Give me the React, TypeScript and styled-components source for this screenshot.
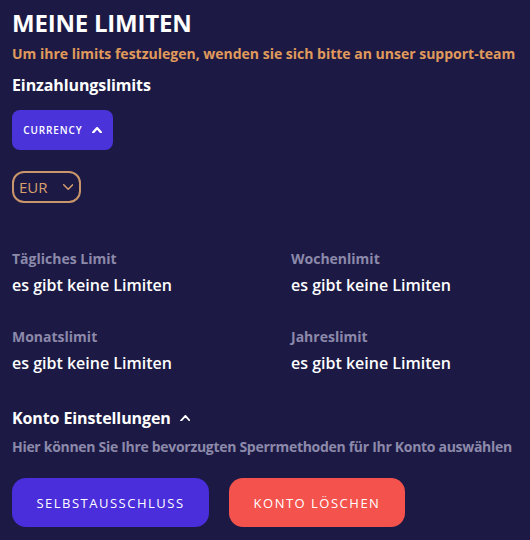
import React from "react";
import styled, { createGlobalStyle } from "styled-components";

const Global = createGlobalStyle`
  html, body { margin: 0; padding: 0; background: #1c1a44; }
  body { font-family: "Open Sans", "Noto Sans", sans-serif; }
`;

const Page = styled.div`
  width: 530px;
  height: 540px;
  box-sizing: border-box;
  padding: 7px 12px 0 12px;
  background: #1c1a44;
  color: #ffffff;
  display: flex;
  flex-direction: column;
  align-items: flex-start;
`;

const Title = styled.h1`
  margin: 0;
  font-size: 24px;
  line-height: 32px;
  font-weight: 700;
  letter-spacing: -0.2px;
`;

const Notice = styled.p`
  margin: 5px 0 0 0;
  font-size: 14px;
  line-height: 20px;
  font-weight: 700;
  color: #e09a5c;
  white-space: nowrap;
`;

const SectionTitle = styled.h2<{ $top: number }>`
  margin: ${(p) => p.$top}px 0 0 0;
  font-size: 16px;
  line-height: 22px;
  font-weight: 700;
  letter-spacing: -0.1px;
  display: flex;
  align-items: center;
  gap: 9px;
`;

const CurrencyButton = styled.button`
  margin-top: 14px;
  width: 101px;
  height: 40px;
  border: none;
  border-radius: 8px;
  background: #4a33d9;
  color: #ffffff;
  font-family: inherit;
  font-size: 10px;
  font-weight: 600;
  letter-spacing: 0.9px;
  display: flex;
  align-items: center;
  justify-content: center;
  gap: 9px;
  padding: 0;
`;

const Select = styled.div`
  margin-top: 21px;
  width: 69px;
  height: 32px;
  box-sizing: border-box;
  border: 2px solid #c9956a;
  border-radius: 12px;
  color: #d9a06f;
  font-size: 15px;
  display: flex;
  align-items: center;
  padding-left: 5px;
  gap: 15px;
`;

const LimitGrid = styled.div`
  margin-top: 47px;
  width: 100%;
  display: grid;
  grid-template-columns: 1fr 1fr;
  column-gap: 52px;
  row-gap: 32px;
`;

const LimitItem = styled.div`
  display: flex;
  flex-direction: column;
  gap: 6px;
`;

const LimitLabel = styled.span`
  font-size: 14px;
  line-height: 18px;
  font-weight: 700;
  color: #8c89aa;
`;

const LimitValue = styled.span`
  font-size: 16px;
  line-height: 22px;
  font-weight: 600;
  color: #ffffff;
`;

const Description = styled.p`
  margin: 8px 0 0 0;
  font-size: 14px;
  line-height: 20px;
  font-weight: 700;
  letter-spacing: -0.3px;
  color: #8c89aa;
  white-space: nowrap;
`;

const ButtonRow = styled.div`
  margin-top: 21px;
  display: flex;
  gap: 20px;
`;

const ActionButton = styled.button<{ $tone: "purple" | "red"; $width: number }>`
  width: ${(p) => p.$width}px;
  height: 49px;
  border: none;
  border-radius: 14px;
  background: ${(p) => (p.$tone === "purple" ? "#4a2ddb" : "#f4524d")};
  color: #ffffff;
  font-family: inherit;
  font-size: 13px;
  font-weight: 400;
  letter-spacing: 1.5px;
  padding: 0;
`;

const Chevron = ({
  dir,
  width,
  height,
  color,
  stroke,
}: {
  dir: "up" | "down";
  width: number;
  height: number;
  color: string;
  stroke: number;
}) => (
  <svg
    width={width + stroke}
    height={height + stroke}
    viewBox={`${-stroke / 2} ${-stroke / 2} ${width + stroke} ${height + stroke}`}
    fill="none"
    stroke={color}
    strokeWidth={stroke}
    strokeLinecap="round"
    strokeLinejoin="round"
  >
    {dir === "up" ? (
      <polyline points={`0 ${height} ${width / 2} 0 ${width} ${height}`} />
    ) : (
      <polyline points={`0 0 ${width / 2} ${height} ${width} 0`} />
    )}
  </svg>
);

const limits = [
  { label: "Tägliches Limit", value: "es gibt keine Limiten" },
  { label: "Wochenlimit", value: "es gibt keine Limiten" },
  { label: "Monatslimit", value: "es gibt keine Limiten" },
  { label: "Jahreslimit", value: "es gibt keine Limiten" },
];

export default function App() {
  return (
    <>
      <Global />
      <Page>
        <Title>MEINE LIMITEN</Title>
        <Notice>Um ihre limits festzulegen, wenden sie sich bitte an unser support-team</Notice>
        <SectionTitle $top={10}>Einzahlungslimits</SectionTitle>
        <CurrencyButton>
          CURRENCY
          <Chevron dir="up" width={8} height={4.5} color="#ffffff" stroke={2.2} />
        </CurrencyButton>
        <Select>
          EUR
          <Chevron dir="down" width={9} height={4.5} color="#d9a06f" stroke={1.4} />
        </Select>
        <LimitGrid>
          {limits.map((l) => (
            <LimitItem key={l.label}>
              <LimitLabel>{l.label}</LimitLabel>
              <LimitValue>{l.value}</LimitValue>
            </LimitItem>
          ))}
        </LimitGrid>
        <SectionTitle $top={33}>
          Konto Einstellungen
          <Chevron dir="up" width={9} height={5} color="#ffffff" stroke={1.8} />
        </SectionTitle>
        <Description>Hier können Sie Ihre bevorzugten Sperrmethoden für Ihr Konto auswählen</Description>
        <ButtonRow>
          <ActionButton $tone="purple" $width={197}>SELBSTAUSSCHLUSS</ActionButton>
          <ActionButton $tone="red" $width={176}>KONTO LÖSCHEN</ActionButton>
        </ButtonRow>
      </Page>
    </>
  );
}
